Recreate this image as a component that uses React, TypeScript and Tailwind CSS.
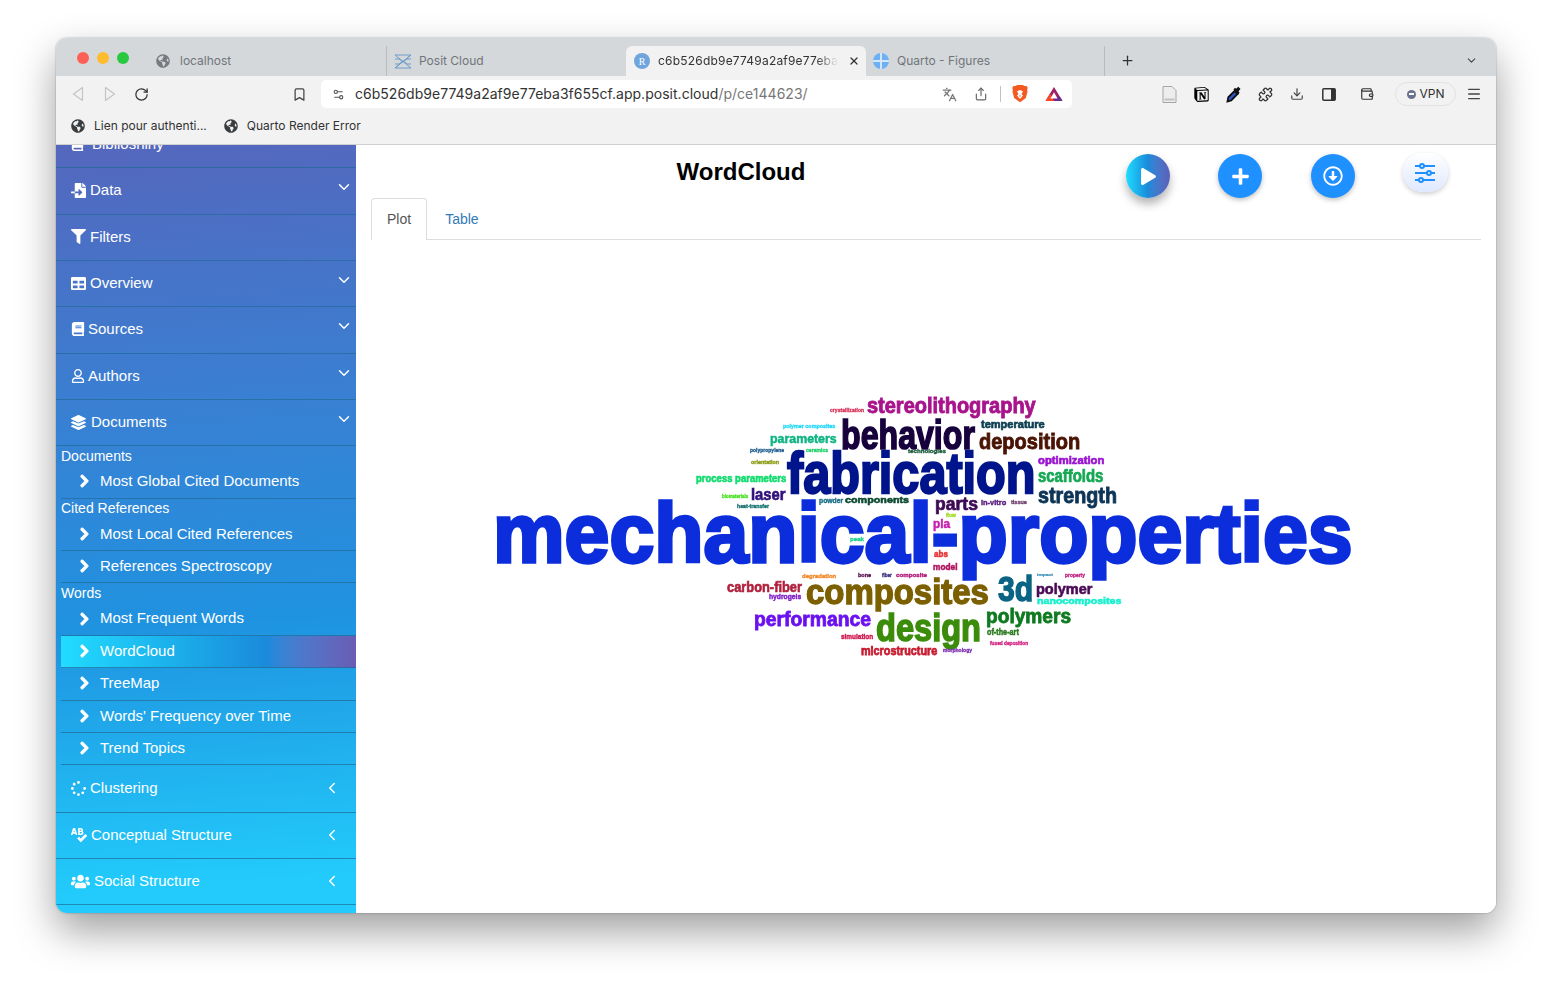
import React, { useLayoutEffect, useRef } from "react";
import {
  Bookmark,
  ChevronDown,
  ChevronLeft,
  Download,
  Languages,
  Menu,
  Plus,
  Puzzle,
  RotateCw,
  Settings2,
  Share,
  Wallet,
  X,
} from "lucide-react";
import {
  FaBook,
  FaChevronRight,
  FaFileImport,
  FaFilter,
  FaGlobeAmericas,
  FaLayerGroup,
  FaPlay,
  FaPlus,
  FaRegArrowAltCircleDown,
  FaRegUser,
  FaSpellCheck,
  FaSpinner,
  FaTable,
  FaUsers,
} from "react-icons/fa";
import { SiNotion } from "react-icons/si";

// word, ink box in page pixels (x0, y0, x1, y1), colour
const WORDS: [string, number, number, number, number, string][] = [
  ["crystallization", 830, 408, 864, 413, "#d8325a"],
  ["stereolithography", 867, 397, 1036, 418, "#a8148c"],
  ["polymer composites", 783, 424, 835, 429, "#22d8f8"],
  ["parameters", 770, 434, 836, 446, "#10b484"],
  ["behavior", 842, 418, 975, 450, "#17003c"],
  ["temperature", 981, 421, 1045, 431, "#0e4052"],
  ["deposition", 979, 433, 1079, 454, "#4a1404"],
  ["polypropylene", 750, 448, 784, 454, "#1c5a8c"],
  ["ceramics", 806, 448, 828, 453, "#1fd06a"],
  ["technologies", 908, 449, 946, 455, "#1a5a3a"],
  ["fabrication", 787, 450, 1034, 495, "#00148c"],
  ["orientation", 751, 460, 779, 465, "#8a9a10"],
  ["process parameters", 696, 475, 786, 485, "#14dc70"],
  ["optimization", 1038, 456, 1104, 467, "#9a14d0"],
  ["scaffolds", 1038, 469, 1103, 483, "#16a854"],
  ["strength", 1038, 487, 1116, 508, "#0e3556"],
  ["laser", 752, 488, 786, 501, "#30107c"],
  ["biomaterials", 722, 494, 748, 498, "#48e020"],
  ["powder", 819, 498, 843, 505, "#1c7088"],
  ["components", 845, 497, 909, 506, "#0c4a30"],
  ["heat-transfer", 737, 504, 769, 509, "#147070"],
  ["parts", 936, 497, 978, 514, "#3e0a56"],
  ["in-vitro", 981, 500, 1006, 506, "#5a1c80"],
  ["tissue", 1011, 500, 1027, 505, "#70406c"],
  ["flow", 946, 513, 956, 518, "#a0d820"],
  ["mechanical-properties", 496, 500, 1351, 581, "#0c2ddc"],
  ["pla", 933, 518, 950, 531, "#c820b0"],
  ["peak", 850, 537, 864, 543, "#20d090"],
  ["abs", 934, 549, 948, 557, "#e83838"],
  ["model", 933, 562, 957, 570, "#b01860"],
  ["degradation", 802, 574, 836, 580, "#f08828"],
  ["bone", 858, 573, 871, 577, "#5a1050"],
  ["fiber", 882, 573, 892, 577, "#3a2a80"],
  ["composite", 896, 573, 927, 579, "#b01878"],
  ["carbon-fiber", 727, 580, 802, 592, "#b0203c"],
  ["hydrogels", 769, 593, 801, 601, "#8020c8"],
  ["composites", 806, 578, 988, 612, "#7c6000"],
  ["performance", 755, 612, 871, 631, "#6a10f0"],
  ["design", 877, 612, 980, 650, "#3c8c0c"],
  ["simulation", 841, 634, 873, 640, "#d01850"],
  ["microstructure", 861, 645, 937, 655, "#c81c30"],
  ["morphology", 943, 648, 972, 653, "#7a28b0"],
  ["3d", 998, 573, 1032, 601, "#0c6484"],
  ["polymer", 1037, 582, 1093, 597, "#4a0a56"],
  ["impact", 1037, 573, 1053, 577, "#3c90b8"],
  ["property", 1065, 573, 1085, 578, "#c02080"],
  ["nanocomposites", 1037, 597, 1121, 606, "#18f0cc"],
  ["polymers", 987, 608, 1071, 628, "#0f7a20"],
  ["of-the-art", 987, 629, 1019, 636, "#2c7a20"],
  ["fused deposition", 990, 641, 1028, 646, "#d02080"],
];

// origin of the plot area on the page
const PLOT_X = 356;
const PLOT_Y = 240;
// baseline of Liberation Sans in a 100px line box at 100px
const BOX_BASELINE = 84.65;

function CloudWord({ word }: { word: (typeof WORDS)[number] }) {
  const [text, x0, y0, x1, y1, color] = word;
  const ref = useRef<HTMLSpanElement>(null);
  const stroke = y1 - y0 < 12 ? 6 : 4;

  useLayoutEffect(() => {
    const el = ref.current;
    const ctx = document.createElement("canvas").getContext("2d");
    if (!el || !ctx) return;
    // fit the ink of the text to the box it has in the cloud
    ctx.font = "bold 100px 'Liberation Sans'";
    const m = ctx.measureText(text);
    const inkW = m.actualBoundingBoxRight + m.actualBoundingBoxLeft + stroke;
    const inkH = m.actualBoundingBoxAscent + m.actualBoundingBoxDescent + stroke;
    const sx = (x1 - x0) / inkW;
    const sy = (y1 - y0) / inkH;
    const baseline = y0 - PLOT_Y + (m.actualBoundingBoxAscent + stroke / 2) * sy;
    el.style.left = `${x0 - PLOT_X + (m.actualBoundingBoxLeft + stroke / 2) * sx}px`;
    el.style.top = `${baseline - BOX_BASELINE * sy}px`;
    el.style.transform = `scale(${sx}, ${sy})`;
  }, [text, x0, y0, x1, y1, stroke]);

  return (
    <span
      ref={ref}
      className="absolute origin-top-left whitespace-nowrap text-[100px] leading-[100px] font-bold"
      style={{ color, WebkitTextStroke: `${stroke}px ${color}` }}
    >
      {text}
    </span>
  );
}

function MainItem({
  icon,
  label,
  arrow,
}: {
  icon?: React.ReactNode;
  label: string;
  arrow?: "down" | "left";
}) {
  return (
    <div className="relative flex h-[46.33px] shrink-0 items-center gap-[4px] border-b-[1.5px] border-[#1f6b96]/70 pb-[1px] pl-[15px] text-[15px] text-white">
      {icon}
      <span>{label}</span>
      {arrow === "down" && (
        <ChevronDown className="absolute right-[3px] top-[10px] h-[18px] w-[18px]" strokeWidth={2} />
      )}
      {arrow === "left" && (
        <ChevronLeft className="absolute right-[15px] top-[13px] h-[18px] w-[18px]" strokeWidth={2} />
      )}
    </div>
  );
}

function SubItem({ label, active }: { label: string; active?: boolean }) {
  return (
    <div
      className={`flex h-[32.4px] items-center border-b-[1.5px] border-[#1f6b96]/70 pb-[1px] pl-[18px] text-[15px] text-white ${
        active
          ? "bg-gradient-to-r from-[#22dcff] via-[#1b8ada] via-70% to-[#6a5cb4]"
          : ""
      }`}
    >
      <FaChevronRight className="w-[11px] stroke-[40px] text-[14px]" />
      <span className="ml-[10px]">{label}</span>
    </div>
  );
}

function GroupLabel({ label }: { label: string }) {
  return (
    <div className="flex h-[20px] items-center text-[14px] text-white">
      {label}
    </div>
  );
}

function Sidebar() {
  return (
    <aside className="flex w-[300px] shrink-0 flex-col overflow-hidden bg-[linear-gradient(176deg,#5467bd_0%,#3a7fd2_33%,#1f93e0_62%,#22cbfb_95%)] font-['Liberation_Sans',sans-serif]">
      <div className="mt-[-23px] shrink-0">
        <MainItem
          icon={<FaBook className="mr-[4px] text-[13px]" />}
          label="Biblioshiny"
        />
      </div>
      <MainItem
        icon={<FaFileImport className="text-[15px]" />}
        label="Data"
        arrow="down"
      />
      <MainItem icon={<FaFilter className="text-[15px]" />} label="Filters" />
      <MainItem
        icon={<FaTable className="text-[15px]" />}
        label="Overview"
        arrow="down"
      />
      <MainItem
        icon={<FaBook className="-mr-[1px] text-[14px]" />}
        label="Sources"
        arrow="down"
      />
      <MainItem
        icon={<FaRegUser className="-mr-[1px] text-[14px]" />}
        label="Authors"
        arrow="down"
      />
      <MainItem
        icon={<FaLayerGroup className="mr-[1px] text-[15px]" />}
        label="Documents"
        arrow="down"
      />
      <div className="mb-[1px] ml-[5px] shrink-0">
        <GroupLabel label="Documents" />
        <SubItem label="Most Global Cited Documents" />
        <GroupLabel label="Cited References" />
        <SubItem label="Most Local Cited References" />
        <SubItem label="References Spectroscopy" />
        <GroupLabel label="Words" />
        <SubItem label="Most Frequent Words" />
        <SubItem label="WordCloud" active />
        <SubItem label="TreeMap" />
        <SubItem label="Words' Frequency over Time" />
        <SubItem label="Trend Topics" />
      </div>
      <MainItem
        icon={<FaSpinner className="text-[15px]" />}
        label="Clustering"
        arrow="left"
      />
      <MainItem
        icon={<FaSpellCheck className="text-[16px]" />}
        label="Conceptual Structure"
        arrow="left"
      />
      <MainItem
        icon={<FaUsers className="text-[19px]" />}
        label="Social Structure"
        arrow="left"
      />
    </aside>
  );
}

function SlidersIcon() {
  return (
    <svg width="22" height="20" viewBox="0 0 22 20" fill="none" stroke="#1e90ff" strokeWidth="2">
      <path d="M1 3h20M1 10h20M1 17h20" />
      <circle cx="8" cy="3" r="2" fill="#eef3ff" />
      <circle cx="15" cy="10" r="2" fill="#eef3ff" />
      <circle cx="7" cy="17" r="2" fill="#eef3ff" />
    </svg>
  );
}

function Content() {
  return (
    <main className="flex min-w-0 flex-1 flex-col bg-white font-['Liberation_Sans',sans-serif]">
      <div className="flex h-[53px] shrink-0 pl-[15px]">
        <h1 className="w-[740px] pt-[10px] text-center text-[24px] leading-[34px] font-bold text-black">
          WordCloud
        </h1>
        <div className="ml-[15px] flex items-start gap-[48.3px] pt-[9px]">
          <button className="flex h-[44px] w-[44px] items-center justify-center rounded-full bg-gradient-to-r from-[#22dcff] via-[#1b8ada] to-[#5a5fb8] shadow-[0_6px_10px_rgba(0,0,0,0.3)]">
            <FaPlay className="ml-[1px] text-[17px] text-white" />
          </button>
          <button className="flex h-[44px] w-[44px] items-center justify-center rounded-full bg-[#1e90ff] shadow-[0_2px_5px_rgba(0,0,0,0.25)]">
            <FaPlus className="text-[19px] text-white" />
          </button>
          <button className="flex h-[44px] w-[44px] items-center justify-center rounded-full bg-[#1e90ff] shadow-[0_2px_5px_rgba(0,0,0,0.25)]">
            <FaRegArrowAltCircleDown className="text-[20px] text-white" />
          </button>
          <button className="-mt-[1px] flex h-[39px] w-[45px] items-center justify-center rounded-[20px] bg-gradient-to-b from-white to-[#dfe8ff] shadow-[0_2px_5px_rgba(0,0,0,0.2)]">
            <SlidersIcon />
          </button>
        </div>
      </div>
      <div className="mx-[15px] flex h-[42px] shrink-0 border-b border-[#dddddd] text-[14px]">
        <div className="h-[42px] rounded-t-[4px] border border-b-0 border-[#dddddd] bg-white px-[15px] pt-[10px] text-[#555555]">
          Plot
        </div>
        <div className="px-[18px] pt-[11px] text-[#337ab7]">Table</div>
      </div>
      <div className="relative flex-1 overflow-hidden blur-[0.35px]">
        {WORDS.map((w) => (
          <CloudWord key={w[0]} word={w} />
        ))}
      </div>
    </main>
  );
}

function Tab({
  icon,
  label,
  className,
}: {
  icon: React.ReactNode;
  label: string;
  className: string;
}) {
  return (
    <div className={`flex h-[30px] items-center text-[12px] text-[#70757a] ${className}`}>
      {icon}
      <span className="truncate">{label}</span>
    </div>
  );
}

function PositIcon() {
  return (
    <svg width="18" height="15" viewBox="0 0 18 15" fill="none" stroke="#6f9cc8" strokeWidth="1">
      <path d="M1 1h16L1 14h16M1 1l16 13M1 14L17 1M1 5h4l4 3 4-3h4M1 10h4l4-3 4 3h4" />
    </svg>
  );
}

function TabStrip() {
  return (
    <div className="flex h-[38px] shrink-0 items-end bg-[#d5d8db] pl-[21px]">
      <div className="mb-[12px] flex gap-[8px]">
        <span className="h-[12px] w-[12px] rounded-full bg-[#fe5f57]" />
        <span className="h-[12px] w-[12px] rounded-full bg-[#febc2e]" />
        <span className="h-[12px] w-[12px] rounded-full bg-[#28c840]" />
      </div>
      <Tab
        className="ml-[19px] w-[239px] border-r border-[#b9bcbf] pl-[8px]"
        icon={<FaGlobeAmericas className="mr-[10px] text-[14px] text-[#777b7f]" />}
        label="localhost"
      />
      <Tab
        className="w-[239px] pl-[7px]"
        icon={
          <span className="mr-[7px]">
            <PositIcon />
          </span>
        }
        label="Posit Cloud"
      />
      <div className="flex h-[30px] w-[240px] items-center rounded-t-[6px] bg-[#f2f2f2] pl-[8px] text-[12px] text-[#333333]">
        <span className="mr-[8px] flex h-[16px] w-[16px] items-center justify-center rounded-full bg-[#6fa5dc] font-['Liberation_Serif',serif] text-[10px] text-white">
          R
        </span>
        <span className="w-[180px] overflow-hidden tracking-[0.2px] whitespace-nowrap [mask-image:linear-gradient(to_right,black_88%,transparent)]">
          c6b526db9e7749a2af9e77eba3f655cf.app.posit.cloud
        </span>
        <X className="ml-[10px] h-[12px] w-[12px] text-[#333333]" strokeWidth={2.5} />
      </div>
      <Tab
        className="w-[239px] border-r border-[#b9bcbf] pl-[7px]"
        icon={
          <span className="relative mr-[8px] h-[16px] w-[16px] overflow-hidden rounded-full bg-[#6db0f5]">
            <span className="absolute left-[7px] top-0 h-[16px] w-[1.5px] bg-[#d5e6fa]" />
            <span className="absolute left-0 top-[7px] h-[1.5px] w-[16px] bg-[#d5e6fa]" />
          </span>
        }
        label="Quarto - Figures"
      />
      <Plus className="mb-[8px] ml-[15px] h-[15px] w-[15px] text-[#333333]" strokeWidth={2} />
      <ChevronDown className="mb-[9px] ml-[330px] h-[13px] w-[13px] text-[#444444]" strokeWidth={2} />
    </div>
  );
}

function NavTriangle({ flip }: { flip?: boolean }) {
  return (
    <svg width="12" height="16" viewBox="0 0 12 16" fill="none" stroke="#c2c4c6" strokeWidth="1.2" className={flip ? "-scale-x-100" : ""}>
      <path d="M10.5 1.5v13L1.5 8z" strokeLinejoin="round" />
    </svg>
  );
}

function BraveIcon() {
  return (
    <svg width="16" height="18" viewBox="0 0 16 18">
      <path d="M3.5 1L5.2 0h5.6l1.7 1 2.500.3.700 1.700-.600 2 .500 1.500-1.800 6.400-5 3.900L8 17l-.800-.200-5-3.900L.400 6.500.900 5l-.600-2L1 1.300z" fill="#f25a22" />
      <path d="M8 5L5 6.200 6.500 9 5 10.500l3 3.500 3-3.500L9.500 9 11 6.200z" fill="#fff" />
      <path d="M6.800 10.500h2.400L8 12z" fill="#f25a22" />
    </svg>
  );
}

function BatIcon() {
  return (
    <svg width="18" height="16" viewBox="0 0 18 16">
      <path d="M9 1l8.500 14H.500z" fill="#9e1f63" />
      <path d="M.500 15L5 7.600 9 15z" fill="#ff4724" />
      <path d="M9 15h8.500l-2.600-4.300H9z" fill="#662d91" />
      <path d="M9 6.200l3.500 6.200h-7z" fill="#fff" />
    </svg>
  );
}

function DropperIcon() {
  return (
    <svg width="16" height="17" viewBox="0 0 16 17">
      <path d="M1.500 15.500l.800-4.200L8.500 5l3 3-6.300 6.500z" fill="#2f55c8" stroke="#111111" strokeWidth="1.800" />
      <path d="M7.500 3.500l5 5 1-2-1-1.200 2-2.200-2.200-2.300-2.200 2-1.200-1z" fill="#111111" />
    </svg>
  );
}

function PageIcon() {
  return (
    <svg width="15" height="17" viewBox="0 0 15 17" fill="#ededed" stroke="#a4a6a8">
      <path d="M1 .5h9l4 4v12H1z" />
      <path d="M2.500 12.500h10v2h-10z" fill="#c0c2c4" stroke="none" />
    </svg>
  );
}

function SidePanelIcon() {
  return (
    <svg width="14" height="13" viewBox="0 0 14 13">
      <rect x=".8" y=".8" width="12.400" height="11.400" rx="1" fill="none" stroke="#333333" strokeWidth="1.500" />
      <rect x="9" y="1" width="4" height="11" fill="#333333" />
    </svg>
  );
}

function Toolbar() {
  return (
    <div className="flex h-[36px] shrink-0 items-center bg-[#f2f2f2] pl-[16px]">
      <NavTriangle />
      <span className="ml-[20px]">
        <NavTriangle flip />
      </span>
      <RotateCw className="ml-[18px] h-[15px] w-[15px] text-[#333333]" />
      <Bookmark className="ml-[143px] h-[15px] w-[15px] text-[#444444]" />
      <div className="ml-[14px] flex h-[28px] w-[751px] items-center rounded-[5px] bg-white pl-[11px] text-[14px] tracking-[0.02px] whitespace-nowrap text-[#333333]">
        <Settings2 className="h-[13px] w-[13px] text-[#555555]" />
        <span className="ml-[10px] pb-[1px]">c6b526db9e7749a2af9e77eba3f655cf.app.posit.cloud</span>
        <span className="pb-[1px] text-[#777777]">/p/ce144623/</span>
        <Languages className="ml-[134px] h-[15px] w-[15px] text-[#777777]" />
        <Share className="ml-[17px] h-[14px] w-[14px] text-[#666666]" />
        <span className="ml-[12px] h-[16px] w-px bg-[#c0c0c0]" />
        <span className="ml-[11px]">
          <BraveIcon />
        </span>
        <span className="ml-[17px]">
          <BatIcon />
        </span>
      </div>
      <span className="ml-[90px]">
        <PageIcon />
      </span>
      <SiNotion className="ml-[17px] h-[15px] w-[15px] text-black" />
      <span className="ml-[17px]">
        <DropperIcon />
      </span>
      <Puzzle className="ml-[16px] h-[15px] w-[15px] text-[#333333]" />
      <Download className="ml-[17px] h-[14px] w-[14px] text-[#444444]" />
      <span className="ml-[18px]">
        <SidePanelIcon />
      </span>
      <Wallet className="ml-[24px] h-[14px] w-[14px] text-[#333333]" />
      <div className="ml-[21px] flex h-[24px] w-[61px] items-center justify-center gap-[4px] rounded-full border border-[#e2e2e2] text-[12px] text-[#333333]">
        <span className="flex h-[9px] w-[9px] items-center justify-center rounded-full bg-[#6a7290]">
          <span className="h-[1.500px] w-[5px] bg-white" />
        </span>
        VPN
      </div>
      <Menu className="ml-[10px] h-[16px] w-[16px] text-[#444444]" />
    </div>
  );
}

function BookmarkBar() {
  return (
    <div className="flex h-[33px] shrink-0 items-center border-b border-[#cfcfcf] bg-[#f2f2f2] pb-[4px] pl-[15px] text-[12px] text-[#333333]">
      <FaGlobeAmericas className="text-[14px] text-[#3a3d40]" />
      <span className="ml-[9px]">Lien pour authenti...</span>
      <FaGlobeAmericas className="ml-[17px] text-[14px] text-[#3a3d40]" />
      <span className="ml-[9px]">Quarto Render Error</span>
    </div>
  );
}

export default function App() {
  return (
    <div className="h-[987px] w-full overflow-hidden bg-white pt-[38px] pl-[56px] font-['Inter',sans-serif]">
      <div className="flex h-[875px] w-[1440px] flex-col overflow-hidden rounded-[11px] shadow-[0_0_2px_rgba(0,0,0,0.35),0_18px_40px_rgba(0,0,0,0.38)]">
        <TabStrip />
        <Toolbar />
        <BookmarkBar />
        <div className="flex min-h-0 flex-1">
          <Sidebar />
          <Content />
        </div>
      </div>
    </div>
  );
}
